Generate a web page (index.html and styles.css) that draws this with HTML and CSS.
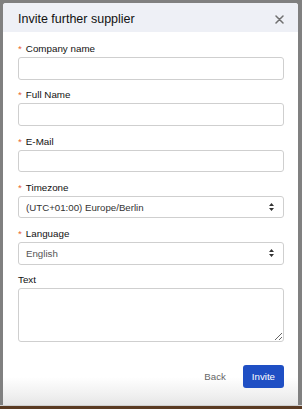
FILE: index.html
```html
<!DOCTYPE html>
<html lang="en">
<head>
    <meta charset="UTF-8">
    <meta name="viewport" content="width=device-width, initial-scale=1.0">
    <title>Invite further supplier</title>
    <link rel="stylesheet" href="styles.css">
</head>
<body>
    <div class="modal">
        <div class="modal-header">
            <h1 class="modal-title">Invite further supplier</h1>
            <button class="close" aria-label="Close">
                <svg width="9" height="9" viewBox="0 0 9 9"><path d="M1 1L8 8M8 1L1 8" stroke="#707070" stroke-width="1.5" stroke-linecap="round"/></svg>
            </button>
        </div>

        <form class="modal-body">
            <div class="field">
                <label class="required">Company name</label>
                <input type="text" class="control">
            </div>
            <div class="field">
                <label class="required">Full Name</label>
                <input type="text" class="control">
            </div>
            <div class="field">
                <label class="required">E-Mail</label>
                <input type="email" class="control">
            </div>
            <div class="field">
                <label class="required">Timezone</label>
                <div class="select-wrap">
                    <select class="control">
                        <option>(UTC+01:00) Europe/Berlin</option>
                    </select>
                    <svg class="arrows" width="5" height="8" viewBox="0 0 5 8"><path d="M2.5 0L5 3H0Z M2.5 8L0 5H5Z" fill="#333"/></svg>
                </div>
            </div>
            <div class="field">
                <label class="required">Language</label>
                <div class="select-wrap">
                    <select class="control muted">
                        <option>English</option>
                    </select>
                    <svg class="arrows" width="5" height="8" viewBox="0 0 5 8"><path d="M2.5 0L5 3H0Z M2.5 8L0 5H5Z" fill="#333"/></svg>
                </div>
            </div>
            <div class="field">
                <label>Text</label>
                <textarea class="control textarea"></textarea>
            </div>
        </form>

        <div class="modal-footer">
            <button class="btn btn-link">Back</button>
            <button class="btn btn-primary">Invite</button>
        </div>
    </div>
    <div class="page-strip"></div>
</body>
</html>
```

FILE: styles.css
```css
html, body {
    margin: 0;
    height: 100%;
}
body {
    font-family: "Liberation Sans", Arial, sans-serif;
    background: #808080;
    color: #222;
    display: flex;
    flex-direction: column;
    overflow: hidden;
}
.modal {
    margin: 3px 4px 0 3px;
    height: 402px;
    background: #fff;
    border-radius: 3px 3px 0 0;
    display: flex;
    flex-direction: column;
    overflow: hidden;
    flex-shrink: 0;
}
.modal-header {
    height: 29px;
    background: #eef0f6;
    display: flex;
    align-items: center;
    justify-content: space-between;
    padding: 0 14px 0 15px;
    flex-shrink: 0;
}
.modal-title {
    margin: 0;
    font-size: 12.5px;
    font-weight: normal;
    color: #111;
    position: relative;
    top: 1px;
}
.close {
    background: none;
    border: none;
    padding: 0;
    width: 9px;
    height: 9px;
    display: flex;
    position: relative;
    top: 2px;
}
.modal-body {
    padding: 10px 14px 0 15px;
}
.field {
    margin-bottom: 8.8px;
}
.field label {
    display: block;
    font-size: 9.8px;
    line-height: 14px;
    margin-bottom: 1px;
    color: #111;
}
.field label.required::before {
    content: "*";
    color: #e8632c;
    margin-right: 4px;
}
.control {
    display: block;
    box-sizing: border-box;
    width: 100%;
    height: 22.5px;
    margin: 0;
    border: 1px solid #cfcfcf;
    border-radius: 3px;
    background: #fff;
    font-family: inherit;
    font-size: 9.7px;
    color: #333;
    padding: 0 7px;
}
.select-wrap {
    position: relative;
}
select.control {
    appearance: none;
    -webkit-appearance: none;
}
select.muted {
    color: #555;
}
.arrows {
    position: absolute;
    right: 10px;
    top: 7px;
    pointer-events: none;
}
.textarea {
    height: 53.5px;
    resize: vertical;
    padding: 4px 7px;
}
.modal-footer {
    margin-top: auto;
    height: 54px;
    box-sizing: border-box;
    display: flex;
    justify-content: flex-end;
    align-items: flex-start;
    gap: 17px;
    padding: 14px 14px 0 0;
    background: linear-gradient(#fff 26px, #f0f0f0 44px, #e6e6e6);
}
.btn {
    font-family: inherit;
    font-size: 9.7px;
    height: 22.5px;
    border: none;
    border-radius: 3px;
    cursor: pointer;
}
.btn-link {
    background: none;
    color: #666;
    padding: 0;
}
.btn-primary {
    background: #1f4fc4;
    color: #fff;
    padding: 0 9px;
}
.page-strip {
    flex: 1;
    background: linear-gradient(#cfcfcf 1.5px, #5a3a22 1.5px);
}
```
